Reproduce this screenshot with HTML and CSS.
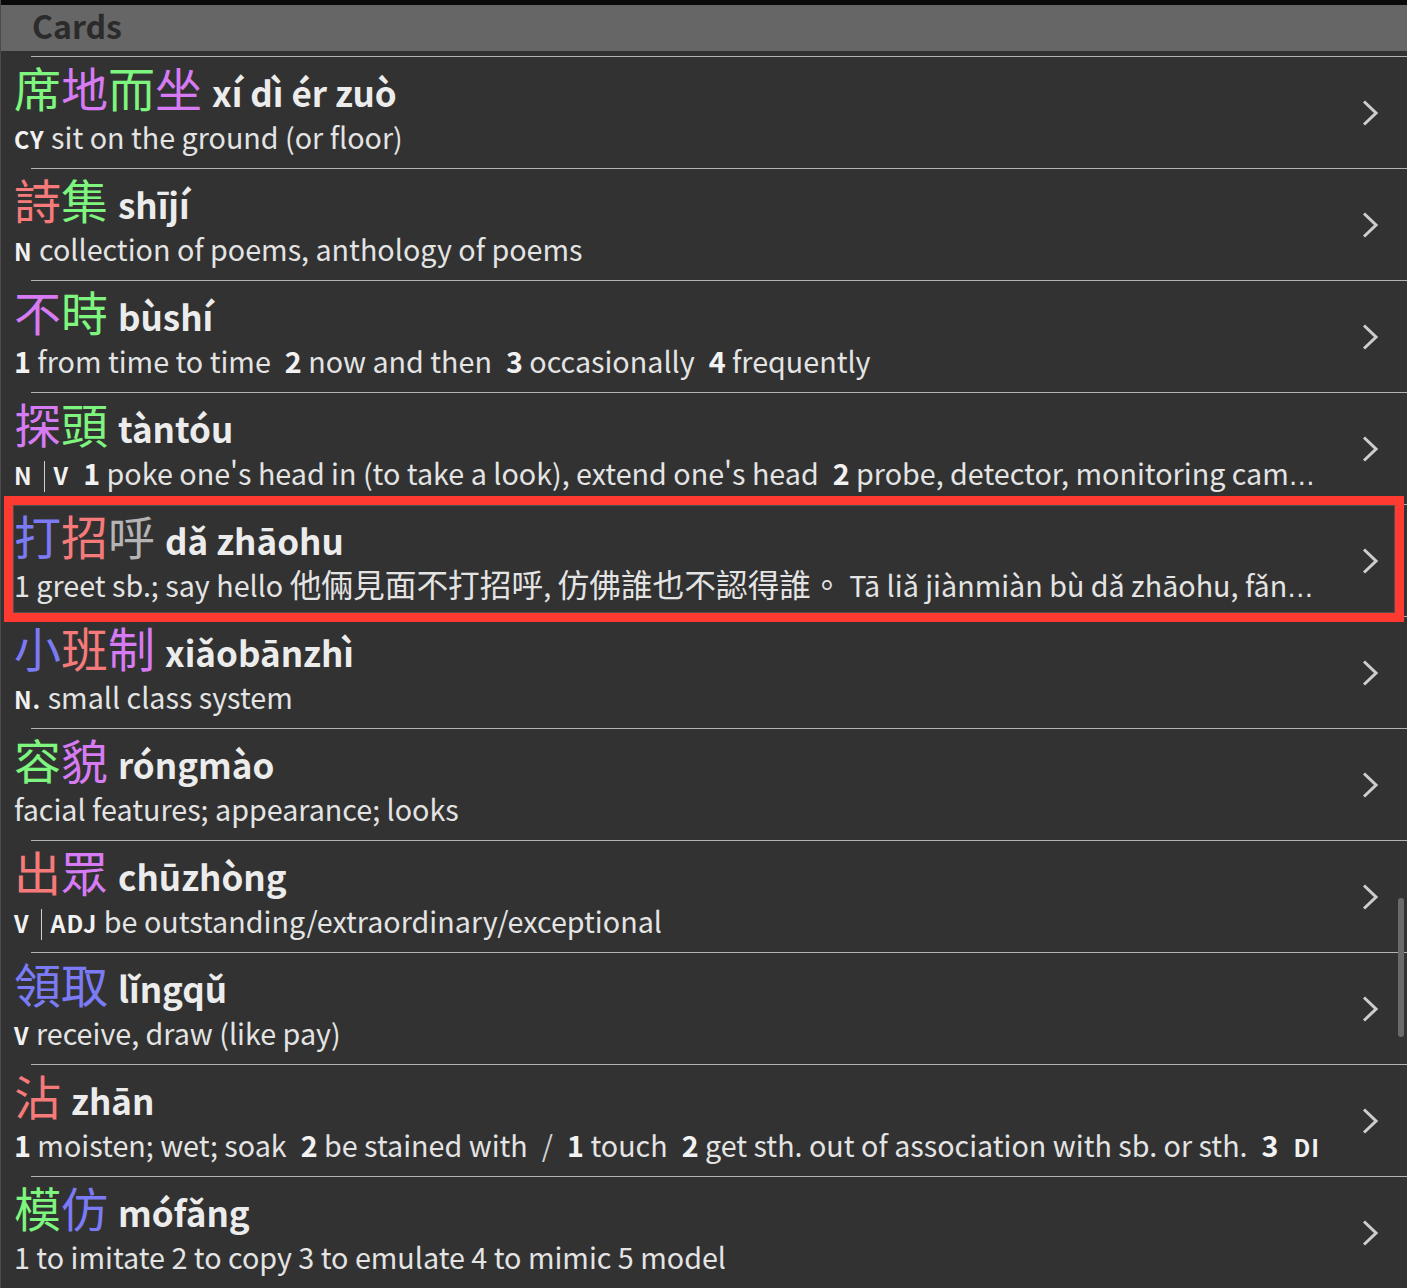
FILE: index.html
```html
<!DOCTYPE html>
<html lang="zh-Hant">
<head>
    <meta charset="UTF-8">
    <meta name="viewport" content="width=device-width, initial-scale=1.0">
    <title>Cards</title>
    <link rel="stylesheet" href="styles.css">
</head>
<body>
    <div class="screen">
        <div class="topbar"></div>
        <div class="section-title">Cards</div>

        <div class="cards">
            <div class="card">
                <div class="card-main">
                    <div class="word"><span class="t2">席</span><span class="t4">地</span><span class="t2">而</span><span class="t4">坐</span><span class="py">xí dì ér zuò</span></div>
                    <div class="def"><b class="pos">CY</b> sit on the ground (or floor)</div>
                </div>
                <svg class="chev" viewBox="0 0 16 26" width="16" height="26"><polyline points="2,1.5 14,13 2,24.5" /></svg>
            </div>

            <div class="card">
                <div class="card-main">
                    <div class="word"><span class="t1">詩</span><span class="t2">集</span><span class="py">shījí</span></div>
                    <div class="def"><b class="pos">N</b> collection of poems, anthology of poems</div>
                </div>
                <svg class="chev" viewBox="0 0 16 26" width="16" height="26"><polyline points="2,1.5 14,13 2,24.5" /></svg>
            </div>

            <div class="card">
                <div class="card-main">
                    <div class="word"><span class="t4">不</span><span class="t2">時</span><span class="py">bùshí</span></div>
                    <div class="def"><span class="s"><b>1</b> from time to time</span><span class="s"><b>2</b> now and then</span><span class="s"><b>3</b> occasionally</span><span class="s"><b>4</b> frequently</span></div>
                </div>
                <svg class="chev" viewBox="0 0 16 26" width="16" height="26"><polyline points="2,1.5 14,13 2,24.5" /></svg>
            </div>

            <div class="card">
                <div class="card-main">
                    <div class="word"><span class="t4">探</span><span class="t2">頭</span><span class="py">tàntóu</span></div>
                    <div class="def"><b class="pos">N</b><span class="bar"></span><b class="pos">V</b><span class="s"><b>1</b> poke one's head in (to take a look), extend one's head</span><span class="s"><b>2</b> probe, detector, monitoring cam</span><span class="ell">…</span></div>
                </div>
                <svg class="chev" viewBox="0 0 16 26" width="16" height="26"><polyline points="2,1.5 14,13 2,24.5" /></svg>
            </div>

            <div class="card selected">
                <div class="card-main">
                    <div class="word"><span class="t3">打</span><span class="t1">招</span><span class="t5">呼</span><span class="py">dǎ zhāohu</span></div>
                    <div class="def">1 greet sb.; say hello <span class="zh">他倆見面不打招呼</span>, <span class="zh">仿佛誰也不認得誰。</span> Tā liǎ jiànmiàn bù dǎ zhāohu, fǎn<span class="ell">…</span></div>
                </div>
                <svg class="chev" viewBox="0 0 16 26" width="16" height="26"><polyline points="2,1.5 14,13 2,24.5" /></svg>
                <div class="highlight"></div>
            </div>

            <div class="card">
                <div class="card-main">
                    <div class="word"><span class="t3">小</span><span class="t1">班</span><span class="t4">制</span><span class="py">xiǎobānzhì</span></div>
                    <div class="def"><b class="pos">N.</b> small class system</div>
                </div>
                <svg class="chev" viewBox="0 0 16 26" width="16" height="26"><polyline points="2,1.5 14,13 2,24.5" /></svg>
            </div>

            <div class="card">
                <div class="card-main">
                    <div class="word"><span class="t2">容</span><span class="t4">貌</span><span class="py">róngmào</span></div>
                    <div class="def">facial features; appearance; looks</div>
                </div>
                <svg class="chev" viewBox="0 0 16 26" width="16" height="26"><polyline points="2,1.5 14,13 2,24.5" /></svg>
            </div>

            <div class="card">
                <div class="card-main">
                    <div class="word"><span class="t1">出</span><span class="t4">眾</span><span class="py">chūzhòng</span></div>
                    <div class="def"><b class="pos">V</b><span class="bar"></span><b class="pos">ADJ</b> be outstanding/extraordinary/exceptional</div>
                </div>
                <svg class="chev" viewBox="0 0 16 26" width="16" height="26"><polyline points="2,1.5 14,13 2,24.5" /></svg>
            </div>

            <div class="card">
                <div class="card-main">
                    <div class="word"><span class="t3">領</span><span class="t3">取</span><span class="py">lǐngqǔ</span></div>
                    <div class="def"><b class="pos">V</b> receive, draw (like pay)</div>
                </div>
                <svg class="chev" viewBox="0 0 16 26" width="16" height="26"><polyline points="2,1.5 14,13 2,24.5" /></svg>
            </div>

            <div class="card">
                <div class="card-main">
                    <div class="word"><span class="t1">沾</span><span class="py">zhān</span></div>
                    <div class="def"><span class="s"><b>1</b> moisten; wet; soak</span><span class="s"><b>2</b> be stained with</span><span class="slash">/</span><span class="s"><b>1</b> touch</span><span class="s"><b>2</b> get sth. out of association with sb. or sth.</span><span class="s"><b>3</b></span><b class="pos tail">DI</b></div>
                </div>
                <svg class="chev" viewBox="0 0 16 26" width="16" height="26"><polyline points="2,1.5 14,13 2,24.5" /></svg>
            </div>

            <div class="card">
                <div class="card-main">
                    <div class="word"><span class="t2">模</span><span class="t3">仿</span><span class="py">mófǎng</span></div>
                    <div class="def">1 to imitate 2 to copy 3 to emulate 4 to mimic 5 model</div>
                </div>
                <svg class="chev" viewBox="0 0 16 26" width="16" height="26"><polyline points="2,1.5 14,13 2,24.5" /></svg>
            </div>
        </div>

        <div class="scroll-thumb"></div>
    </div>
</body>
</html>
```

FILE: styles.css
```css
html, body {
    margin: 0;
    padding: 0;
    height: 100%;
    overflow: hidden;
}

body {
    background-color: #323232;
    font-family: "Noto Sans CJK TC", "Noto Sans", sans-serif;
    color: #e4e4e4;
}

.screen {
    position: relative;
    height: 100%;
    border-left: 1px solid #4a4a4a;
}

.topbar {
    height: 5px;
    background-color: #0a0a0a;
}

.section-title {
    height: 46px;
    box-sizing: border-box;
    padding-left: 31px;
    background-color: #666666;
    color: #2b2b2b;
    font-size: 32px;
    font-weight: 700;
    line-height: 40px;
}

.cards {
    padding-top: 5px;
}

.card {
    position: relative;
    display: flex;
    align-items: center;
    height: 112px;
    box-sizing: border-box;
    padding: 1px 29px 0 13px;
    background: linear-gradient(#b4b4b4, #b4b4b4) no-repeat 30px 0 / calc(100% - 30px) 1px;
}

.card-main {
    flex: 1;
    min-width: 0;
    margin-right: 30px;
    align-self: flex-start;
}

.word {
    font-size: 47px;
    line-height: 60px;
    white-space: nowrap;
}

.py {
    margin-left: 10px;
    font-size: 35px;
    font-weight: 700;
    line-height: 40px;
    color: #ececec;
}

.t1 { color: #f67a7a; }
.t2 { color: #7ef57e; }
.t3 { color: #7b7bf6; }
.t4 { color: #d67bf4; }
.t5 { color: #b4b4b4; }

.def {
    font-size: 28.7px;
    line-height: 40px;
    white-space: nowrap;
}

.def b {
    font-weight: 700;
    color: #f2f2f2;
}

.pos {
    font-size: 23.5px;
    letter-spacing: 1px;
}

.zh {
    font-size: 31.7px;
    line-height: 36px;
}

.ell {
    font-family: "DejaVu Sans", sans-serif;
    font-size: 26px;
}

.s + .s {
    margin-left: 14px;
}

.pos + .s {
    margin-left: 14px;
}

.slash {
    margin-left: 14px;
    color: #d0d0d0;
}

.slash + .s {
    margin-left: 14px;
}

.tail {
    margin-left: 15px;
}

.bar {
    display: inline-block;
    width: 1px;
    height: 31px;
    margin: 0 9px 0 11px;
    background-color: #cfcfcf;
    vertical-align: -7px;
}

.chev {
    flex: none;
}

.chev polyline {
    fill: none;
    stroke: #cdcdcd;
    stroke-width: 3;
}

.highlight {
    position: absolute;
    top: -8px;
    left: 3px;
    right: 3px;
    height: 126px;
    box-sizing: border-box;
    border: 9px solid #ff3a30;
    box-shadow: inset 0 0 0 1px #4e4e4e;
    z-index: 1;
    pointer-events: none;
}

.scroll-thumb {
    position: absolute;
    top: 898px;
    right: 3px;
    width: 6px;
    height: 139px;
    border-radius: 3px;
    background-color: #6a6a6a;
}
```
